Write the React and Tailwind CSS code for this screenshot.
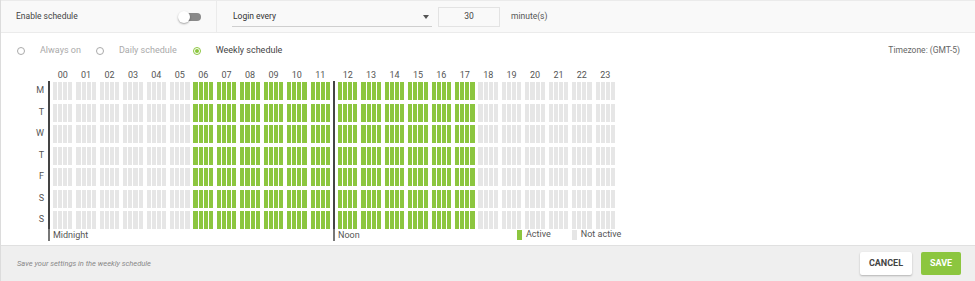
import React from "react";

const HOURS = Array.from({ length: 24 }, (_, i) => String(i).padStart(2, "0"));
const DAYS = ["M", "T", "W", "T", "F", "S", "S"];

function HourGroup({ active }) {
  return (
    <div className="flex gap-[1px] h-full">
      {[0, 1, 2, 3].map((i) => (
        <div key={i} className={"flex-1 " + (active ? "bg-[#8cc63f]" : "bg-[#e6e6e6]")} />
      ))}
    </div>
  );
}

function Half({ start }) {
  return (
    <div className="w-[277px] flex flex-col">
      <div className="grid grid-cols-12 gap-x-[4px] h-[12px] mb-[1px]">
        {HOURS.slice(start, start + 12).map((h) => (
          <div key={h} className="text-center text-[9px] leading-[12px] text-[#555]">{h}</div>
        ))}
      </div>
      <div className="flex flex-col gap-[3.5px]">
        {DAYS.map((d, r) => (
          <div key={r} className="grid grid-cols-12 gap-x-[4px] h-[18px]">
            {Array.from({ length: 12 }, (_, i) => {
              const h = start + i;
              return <HourGroup key={i} active={h >= 6 && h <= 17} />;
            })}
          </div>
        ))}
      </div>
    </div>
  );
}

export default function App() {
  return (
    <div className="w-[975px] h-[281px] bg-white flex flex-col border-l border-[#dcdcdc] text-[#333]" style={{ fontFamily: "Roboto, 'Liberation Sans', sans-serif" }}>
      {/* top bar */}
      <div className="h-[33px] bg-[#f9f9f9] border-t border-b border-[#ebebeb] flex items-center shrink-0">
        <div className="w-[216px] h-full flex items-center pl-[15px] pr-[15px] border-r border-[#ebebeb]">
          <span className="text-[8.5px] text-[#444]">Enable schedule</span>
          <div className="ml-auto relative w-[23px] h-[12px] flex items-center">
            <div className="absolute left-[5px] right-0 h-[8px] rounded-full bg-[#8a8a8a]" />
            <div className="absolute left-0 w-[12px] h-[12px] rounded-full bg-white shadow-[0_1px_2px_rgba(0,0,0,0.35)]" />
          </div>
        </div>
        <div className="flex items-center pl-[15px]">
          <div className="w-[200px] h-[20px] border-b border-[#cfcfcf] flex items-center relative">
            <span className="text-[8.5px] text-[#333] pl-[1px]">Login every</span>
            <div className="absolute right-[3px] top-[8px] w-0 h-0 border-l-[3.5px] border-r-[3.5px] border-t-[4px] border-l-transparent border-r-transparent border-t-[#555]" />
          </div>
          <div className="ml-[6px] w-[62px] h-[20px] border border-[#e3e3e3] bg-[#f9f9f9] flex items-center justify-center text-[8.5px] text-[#444]">30</div>
          <span className="ml-[11px] text-[8.5px] text-[#555]">minute(s)</span>
        </div>
      </div>

      {/* radio row */}
      <div className="h-[35px] flex items-center pl-[16px] pr-[15px] shrink-0">
        <div className="w-[8px] h-[8px] rounded-full border border-[#aaa]" />
        <span className="ml-[15px] text-[9px] text-[#aaa]">Always on</span>
        <div className="ml-[15px] w-[8px] h-[8px] rounded-full border border-[#aaa]" />
        <span className="ml-[15px] text-[9px] text-[#aaa]">Daily schedule</span>
        <div className="ml-[16px] w-[8px] h-[8px] rounded-full border border-[#8cc63f] flex items-center justify-center">
          <div className="w-[4px] h-[4px] rounded-full bg-[#8cc63f]" />
        </div>
        <span className="ml-[15px] text-[9px] text-[#444]">Weekly schedule</span>
        <span className="ml-auto text-[8.5px] text-[#666]">Timezone: (GMT-5)</span>
      </div>

      {/* grid */}
      <div className="flex shrink-0 pt-[1px]">
        <div className="w-[47px] flex flex-col pt-[13px]">
          <div className="flex flex-col gap-[3.5px]">
            {DAYS.map((d, i) => (
              <div key={i} className="h-[18px] flex items-center justify-end pr-[4px] text-[9px] text-[#555]">{d}</div>
            ))}
          </div>
        </div>
        <div className="flex flex-col">
          <div className="flex">
            <div className="flex flex-col">
              <div className="h-[12px]" />
              <div className="w-[2px] flex-1 bg-[#444]" />
            </div>
            <div className="pl-[3px]">
              <Half start={0} />
            </div>
            <div className="flex flex-col ml-[3px]">
              <div className="h-[12px]" />
              <div className="w-[2px] flex-1 bg-[#444]" />
            </div>
            <div className="pl-[3px]">
              <Half start={12} />
            </div>
          </div>
          <div className="flex h-[12px]">
            <div className="w-[285px] flex items-stretch">
              <div className="w-[2px] bg-[#777]" />
              <span className="ml-[3px] text-[9px] leading-[12px] text-[#555]">Midnight</span>
            </div>
            <div className="flex items-stretch w-[184px]">
              <div className="w-[2px] bg-[#777]" />
              <span className="ml-[3px] text-[9px] leading-[12px] text-[#555]">Noon</span>
            </div>
            <div className="flex items-center">
              <div className="w-[5px] h-[10px] bg-[#8cc63f]" />
              <span className="ml-[4px] text-[9px] text-[#555]">Active</span>
              <div className="ml-[21px] w-[5px] h-[10px] bg-[#e6e6e6]" />
              <span className="ml-[4px] text-[9px] text-[#555]">Not active</span>
            </div>
          </div>
        </div>
      </div>

      {/* footer */}
      <div className="mt-auto h-[36px] bg-[#efefef] border-t border-[#e0e0e0] flex items-center pl-[16px] pr-[14px] shrink-0">
        <span className="text-[7.5px] italic text-[#888]">Save your settings in the weekly schedule</span>
        <button className="ml-auto w-[52px] h-[23px] bg-white rounded-[2px] shadow-[0_1px_2px_rgba(0,0,0,0.25)] text-[9px] font-bold text-[#444]">CANCEL</button>
        <button className="ml-[9px] w-[40px] h-[23px] bg-[#8cc63f] rounded-[2px] text-[9px] font-bold text-white">SAVE</button>
      </div>
    </div>
  );
}
